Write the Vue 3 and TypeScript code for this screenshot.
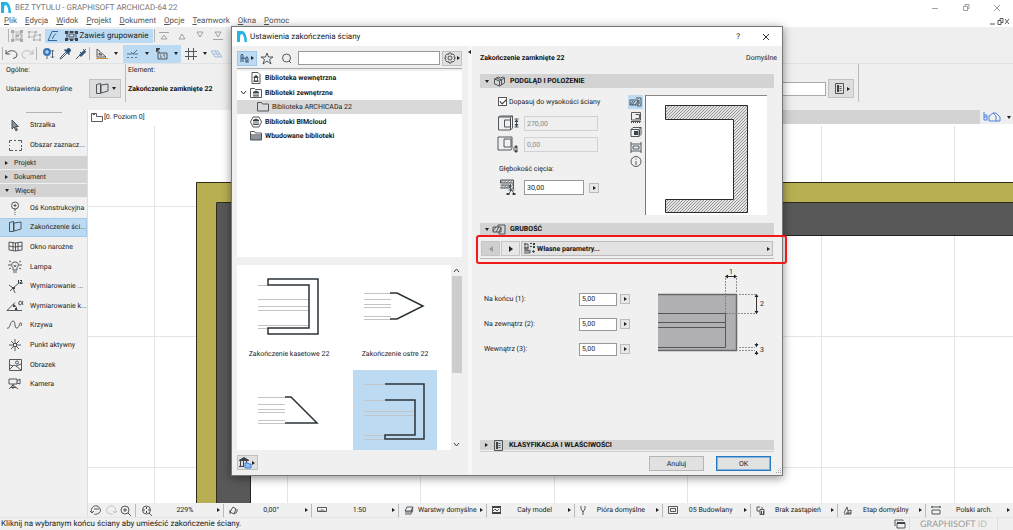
<script setup lang="ts">
import { h, ref } from 'vue'

interface Glyph { w: number; h: number; d?: string; f?: string; c?: string; fc?: string }

const glyphs: Record<string, Glyph> = {
  logo: { w: 10, h: 11, f: 'M0 11V0h5c3 0 5 5 5 11H7.500C7.500 6 6 3 4.500 3S3 7 3 11z', fc: '#25b4e0' },
  group: { w: 13, h: 12, d: 'M2 2h8v8H2zM5 4h6v5H5z', f: 'M0 0h3v3H0zM9 0h3v3H9zM0 9h3v3H0zM9 9h3v3H9zM5 5h3v2H5z', c: '#aaa', fc: '#aaa' },
  ungroup: { w: 13, h: 12, d: 'M1 2h6v5H1zM6 5h6v5H6z', f: 'M0 1h2v2H0zM7 1h2v2H7zM0 6h2v2H0zM5 9h2v2H5zM11 4h2v2h-2zM11 9h2v2h-2z', c: '#b2b2b2', fc: '#b2b2b2' },
  shape: { w: 12, h: 12, d: 'M11 1.500H5L3.500 5L1 10.500h9M9 3.500L6.500 6l-1 3', c: '#1f5a92' },
  suspend: { w: 13, h: 12, d: 'M2 2h9v7H2zM4 4h5v3H4z', f: 'M0 1h3v3H0zM5 1h3v2H5zM10 1h3v3h-3zM0 8h3v3H0zM5 9h3v2H5zM10 8h3v3h-3z' },
  topmost: { w: 10, h: 9, d: 'M0 1.500h10M5 4L8 8H2z', c: '#999' },
  up: { w: 10, h: 9, d: 'M5 3L8 8H2z', c: '#999' },
  down: { w: 10, h: 9, d: 'M5 6L2 1h6z', c: '#999' },
  bottommost: { w: 10, h: 9, d: 'M0 8.500h10M5 6L2 1h6z', c: '#999' },
  undo: { w: 13, h: 10, d: 'M1 1v4h4M1 5C4 0 12 1 12 6q0 3-4 3.500' },
  redo: { w: 13, h: 10, d: 'M12 1v4H8M12 5C9 0 1 1 1 6q0 3 4 3.500', c: '#b5b5b5' },
  find: { w: 12, h: 12, d: 'M9.500 2v8M8 3.500L9.500 2 11 3.500M8 8.500L9.500 10 11 8.500M4 8v3', f: 'M4 0a4 4 0 1 1 0 8a4 4 0 0 1 0-8M3.500 2v1.500H2v1h1.500V6h1V4.500H6v-1H4.500V2z', fc: '#3977bd', c: '#44586e' },
  dropper: { w: 12, h: 12, d: 'M7 4L2 9l-1 2 2-1 5-5', f: 'M7 2l2-2q3 0 3 3l-2 2 1 1-1 1-5-5 1-1z', fc: '#294e78', c: '#334d67' },
  syringe: { w: 12, h: 12, d: 'M1 11l4-4M5 4l3 3M8 1l3 3M9 3l2-2', f: 'M4 7l5-5 2 2-5 5z', fc: '#315c81' },
  triangle: { w: 13, h: 12, d: 'M2 1v8h9zM4 5v2h3z', f: 'M1 10h12v1H1z', fc: '#cb8a45' },
  guide: { w: 13, h: 12, d: 'M1 6h5M11 2L7 6 5 4M7 6h5M1 9.500h2M5 9.500h2M9 9.500h2', c: '#35698f' },
  coord: { w: 12, h: 12, d: 'M2 5h9v6H2zM4 7h1M7 7h2M4 9h2M8 9h1M1 1v3h3', f: 'M0 0h4v1L2 3 0 4z' },
  grid: { w: 12, h: 12, d: 'M3.500 0v12M8.500 0v12M0 3.500h12M0 8.500h12' },
  plane: { w: 13, h: 10, d: 'M1 2h7l4 6H5zM3 5h7M5 2l4 6', c: '#94b5df' },
  wallEnd: { w: 13, h: 12, d: 'M.5 1.500l4-1v10h-4zM5 2l7-1v7l-7 2z' },
  arrow: { w: 10, h: 12, d: 'M2 1v9l2-2 2 4 1.500-1-2-3.500h3z', f: 'M2 1v9l2-2 2 4 1.500-1-2-3.500h3z', fc: '#8b929a' },
  marquee: { w: 13, h: 11, d: 'M.5 3V.5H3M5 .5h2M9 .5h3.500V3M12.500 5v2M12.500 8v2.500H10M8 10.500H6M4 10.500H.5V8M.5 6V5' },
  axis: { w: 12, h: 14, d: 'M6 1a3.500 3.500 0 1 1 0 7a3.500 3.500 0 0 1 0-7M6 3v3M4.500 4.500h3M6 8v2M6 11v1M6 13v1' },
  window: { w: 15, h: 11, d: 'M1 1l6 1 7-1v8l-7 1-6-1zM5 1.500v8M7.500 2v8M10 1.500v8M1 5l6 1 7-1' },
  lamp: { w: 14, h: 13, d: 'M7 2a3 3 0 0 1 2 5.500V10H5V7.500A3 3 0 0 1 7 2M5 12h4M6 5l1 2 1-2M1 1l2 1M0 5h3M1 9l2-1M13 1l-2 1M14 5h-3M13 9l-2-1' },
  dimension: { w: 15, h: 13, d: 'M1 5l4 3 6-5h4M5 8l2 5M2 11l3-3', f: 'M4 7h3v2H4zM10 0h1v3h-1zM12 0h2v1h-2zM13 1h1v1h-1v1h1v1h-2V2h1z' },
  angle: { w: 18, h: 12, d: 'M1 10.500h15M1 10.500l8-8M7 4q4 2 4 6M17 1q-1 4-3 4t-1-3q2-3 4 3', f: 'M7 5h2v2H7zM9 8h2v2H9z' },
  curve: { w: 16, h: 10, d: 'M0 8C3 10 3 1 6 1s1 8 4 7 2-6 4-5q1 1 0 3' },
  hotspot: { w: 12, h: 12, d: 'M6 0v4M6 8v4M0 6h4M8 6h4M2 2l3 3M7 7l3 3M10 2L7 5M5 7l-3 3M4.500 4.500h3v3h-3z' },
  image: { w: 13, h: 12, d: 'M.5.5h12v11H.5zM1 10l4-4 2 1 5 4M1 6l3 1M7 7l5-2M8 2a1.500 1.500 0 1 1 0 3a1.500 1.500 0 0 1 0-3' },
  camera: { w: 14, h: 12, d: 'M1 1h8v5H1zM9 3l3-2v5L9 5M5 6v5M5 7l-4 4M5 7l5 4M2 9.500h6' },
  folderTab: { w: 12, h: 9, d: 'M.5 8.500v-8h5v3h6v5zM2 .5v1h2' },
  home3d: { w: 18, h: 10, d: 'M1 0v8h3V3H1M1 5h3M6 9V4l4-3 3 3v5zM10 1h3l4 4v4h-4', c: '#3978dd' },
  chair: { w: 10, h: 11, d: 'M1 9V2q1-2 2 0v4M1 5h3l2 1v4M3 6v3M6 6V4q2-1 2 2v4M6 8h2', c: '#274a67' },
  star: { w: 12, h: 11, d: 'M6 0l1.500 4H12L8.500 6.500 10 11 6 8l-4 3 1.500-4.500L0 4h4.500z' },
  search: { w: 11, h: 11, d: 'M5.500 1a4 4 0 1 1 0 8a4 4 0 0 1 0-8M8 8l2 2' },
  gear: { w: 12, h: 12, d: 'M5 1h2l.5 1.500L9 2l1.500 1.500-.5 1.500L11.500 6l-1.500 1 .5 1.500L9 10l-1.500-.5L7 11H5l-.5-1.500L3 10 1.500 8.500 2 7 .5 6 2 5l-.5-1.500L3 2l1.500.5zM6 4a2 2 0 1 1 0 4a2 2 0 0 1 0-4' },
  libDoc: { w: 9, h: 12, d: 'M.5.5h6l2 2v9h-8zM2 9.500h5M3 6v3M6 6v3', f: 'M2 5l2.500-2L7 5v1H2zM2 8.500h5v1H2z' },
  libFolder: { w: 12, h: 10, d: 'M.5.5h4l1 1h6v8H.5zM3 8h6M4 5v3M6 5v3M8 5v3', f: 'M3 4l3-1.500L9 4v1H3z' },
  folder: { w: 12, h: 10, d: 'M.5.5h4l1 1.500h6v7H.5z' },
  cloud: { w: 12, h: 12, d: 'M3 1h6l2.500 5L9 11H3L.5 6zM3 8.500h6M4 5v3M6 5v3M8 5v3', f: 'M3 4l3-1.500L9 4v1H3z' },
  folderFull: { w: 12, h: 10, d: 'M.5.5h4l1 1.500h6v7H.5z', f: 'M.5 3h11v6H.5z', fc: '#8d9398' },
  model: { w: 12, h: 11, d: 'M1 3l4-2 2 1 3-1 1 1v5l-5 3-5-2zM1 3l5 2 5-3M6 5v5M3 2l5 2v5' },
  height: { w: 21, h: 17, d: 'M1 2l2-1h12v12l-2 2H1zM1 2h12v13M13 2l2-1M7 5h6v7H7zM17 4h4M17 12h4M19 5v7', f: 'M19 4l2 3h-4zM19 12l-2-3h4z' },
  offset: { w: 22, h: 17, d: 'M1 1h14v11l-1 2H1zM7 3h7v8H7zM16 12h5M16 14h5M19 9v3M19 14v3', f: 'M19 12l-2-2h4zM19 14l-2 2h4z' },
  cut: { w: 15, h: 17, d: 'M0 4l3-3M3 4l3-3M6 4l3-3M9 4l3-3M0 9l3-3M3 9l3-3M6 9l3-3M0 1h13v3H0zM0 6h9v3H0M10 5v7M13 4v6M10 8l3-3M10 11l3-3M8 11h6M11 11l-3 4M11 11l3 4', f: 'M6 14h3v2H6zM12 14h3v2h-3z' },
  view2d: { w: 12, h: 10, d: 'M0 8l3-4M2 8l3-4M5 8l3-4M0 3h8v5H0zM6 1h5v8H7M9 3v4' },
  elevation: { w: 12, h: 11, d: 'M1.500 8V.5h9V8zM5.500 2.500h4v4h-4M1 9.500h10', f: 'M1 10h1v1H1zM3 10h1v1H3zM5 10h1v1H5zM7 10h1v1H7zM9 10h1v1H9z' },
  view3d: { w: 12, h: 11, d: 'M1 2.500l2-2h8v7l-2 2H1zM1 2.500h8v7M9 2.500l2-2', f: 'M4 4h4v4H4zM9 3h1v5H9z' },
  photo: { w: 12, h: 11, d: 'M1 0v11M11 0v11M1 2h10M1 9h10M3 4h6v3H3z' },
  info: { w: 12, h: 12, d: 'M6 .5a5 5 0 1 1 0 10a5 5 0 0 1 0-10M6 5v4', f: 'M5.500 2.500h1v1h-1z' },
  thickness: { w: 13, h: 11, d: 'M0 7l3-4M3 8l3-5M6 8l2-4M0 3h8v5H0zM5 3V1h7v9H6V8' },
  params: { w: 11, h: 11, d: 'M1 0v11M0 1h4M4 1v4H1M3 6v5M1 7h4v4M6 7v3M8 8.500h3M9.500 7v3M0 5h5', f: 'M6 0h2v1H6zM9 0h2v2H9zM6 3h2v1H6zM9 3h2v2H9z' },
  list: { w: 9, h: 11, d: 'M.5.5h8v10h-8zM4.500 3.500h2M4.500 5.500h2M4.500 7.500h2', f: 'M2 2h2v7H2z' },
  zoomBack: { w: 12, h: 11, d: 'M0 6l2 2 2-2M2 7C0 3 4 0 7 1s5 5 2 7-5 1-5 1M4 4h5' },
  zoomNext: { w: 12, h: 11, d: 'M12 6l-2 2-2-2M10 7C12 3 8 0 5 1S0 6 3 8s5 1 5 1', c: '#bbb' },
  zoomIn: { w: 11, h: 11, d: 'M5 1a4 4 0 1 1 0 8a4 4 0 0 1 0-8M3 5h4M5 3v4M8 8l3 3' },
  zoomFit: { w: 12, h: 11, d: 'M5.500 1a4 4 0 1 1 0 8a4 4 0 0 1 0-8M8 8l3 3', f: 'M5 2h1v2H5zM5 6h1v2H5zM2 4.500h2v1H2zM7 4.500h2v1H7z' },
  rotate: { w: 9, h: 9, d: 'M1 6l3-5 3 2-2 5zM8 3v3l-3 2M1 4v4' },
  scale: { w: 10, h: 6, d: 'M.5.5h9v4h-9zM3 3v1M5 2v2M7 3v1' },
  layers: { w: 10, h: 9, d: 'M3 1h6L7 5H1zM1 6h6l2-4M1 8h6l2-4' },
  struct: { w: 9, h: 8, d: 'M.5.5h8v7h-8zM1 5l2-2 2 2 2-2', f: 'M0 0h9v2H0zM0 6h9v2H0z' },
  pen: { w: 6, h: 9, d: 'M1 0v3l2 3 2-3V0M3 6v3' },
  frame: { w: 10, h: 8, d: 'M.5.5h9v7h-9zM2.500 2.500h5v3h-5z' },
  override: { w: 9, h: 9, d: 'M4 5H1V1h3M4 3.500h4v5H4zM6 1v2', f: 'M5 5h1v3H5zM7 5h1v3H7z' },
  stage: { w: 9, h: 9, d: 'M1 7l3-6 1 4 3-1v4H1M5 5v3M3 7h5' },
  dimStd: { w: 10, h: 9, d: 'M0 1h10M1 0v2M9 0v2M1 4h8v4H1z' },
  windows: { w: 12, h: 10, d: 'M1 7V1h8v1M3 4h8v5H3z', f: 'M3 3h8v2H3z' },
}

const Icon = (p: { name: string }) => {
  const g = glyphs[p.name]
  return h('svg', { width: g.w, height: g.h, viewBox: `0 0 ${g.w} ${g.h}`, 'aria-hidden': 'true', style: 'display:block;flex:none;overflow:visible' }, [
    g.f ? h('path', { d: g.f, fill: g.fc ?? '#3c4247' }) : null,
    g.d ? h('path', { d: g.d, fill: 'none', stroke: g.c ?? '#41474c', 'stroke-width': 0.9 }) : null,
  ])
}
Icon.props = ['name']

const menu = ['Plik', 'Edycja', 'Widok', 'Projekt', 'Dokument', 'Opcje', 'Teamwork', 'Okna', 'Pomoc']
const tools = [
  ['axis', 'Oś Konstrukcyjna'], ['wallEnd', 'Zakończenie ści...'], ['window', 'Okno narożne'], ['lamp', 'Lampa'],
  ['dimension', 'Wymiarowanie ...'], ['angle', 'Wymiarowanie k...'], ['curve', 'Krzywa'], ['hotspot', 'Punkt aktywny'],
  ['image', 'Obrazek'], ['camera', 'Kamera'],
]
const activeTool = ref(1)
const vGrid = [66, 199, 332, 466, 599, 733, 866]
const hGrid = [82, 212, 343]
const quick = [
  ['zoomFit', '229%'], ['rotate', '0,00°'], ['scale', '1:50'], ['layers', 'Warstwy domyślne'], ['struct', 'Cały model'],
  ['pen', 'Pióra domyślne'], ['frame', '05 Budowlany'], ['override', 'Brak zastąpień'], ['stage', 'Etap domyślny'], ['dimStd', 'Polski arch.'],
]
const tree = [
  { icon: 'libDoc', label: 'Biblioteka wewnętrzna' },
  { icon: 'libFolder', label: 'Biblioteki zewnętrzne', open: true },
  { icon: 'folder', label: 'Biblioteka ARCHICADa 22', child: true },
  { icon: 'cloud', label: 'Biblioteki BIMcloud' },
  { icon: 'folderFull', label: 'Wbudowane biblioteki' },
]
const ends = [
  { label: 'Zakończenie kasetowe 22', light: 'M11 20.500h10M11 34.500h51M11 41.500h51M11 45.500h51M11 60.500h51M11 63.500h10', dark: 'M21 14h50v55H21v-6h41V20H21z' },
  { label: 'Zakończenie ostre 22', light: 'M11 28.500h27M11 34.500h27M11 39.500h27M11 42.500h27M11 51.500h27M11 54.500h27', dark: 'M37 28h7l26 13-26 13h-7' },
  { label: '', light: 'M11 27.500h27M11 34.500h27M11 39.500h27M11 42.500h27M11 50.500h27M11 53.500h27', dark: 'M38 27h6l26 26H38' },
  { label: '', light: 'M11 14.500h21M11 30.500h21M11 41.500h51M11 45.500h51M11 65.500h21M11 69.500h21', dark: 'M32 14h39v55H32v-4h30V30H32' },
]
const activeEnd = ref(3)
const views = ['view2d', 'elevation', 'view3d', 'photo', 'info']
const activeView = ref(0)
const query = ref('')
const fit = ref(true)
const depth = ref('30,00')
const params = ref([
  { id: 'end', label: 'Na końcu (1):', value: '5,00' },
  { id: 'outer', label: 'Na zewnątrz (2):', value: '5,00' },
  { id: 'inner', label: 'Wewnątrz (3):', value: '5,00' },
])
</script>

<template>
  <div class="app">
    <header class="titlebar">
      <Icon name="logo" />
      <span>BEZ TYTUŁU - GRAPHISOFT ARCHICAD-64 22</span>
      <div class="wins">
        <button aria-label="Minimalizuj"><svg width="8" height="8"><path d="M1 4.500h6" /></svg></button>
        <button aria-label="Przywróć"><svg width="8" height="8"><path d="M1.500 2.500h4v4h-4zM3 2V.5h4v4H6" /></svg></button>
        <button aria-label="Zamknij"><svg width="8" height="8"><path d="M1 1l6 6M7 1L1 7" /></svg></button>
      </div>
    </header>
    <nav class="menubar">
      <a v-for="m in menu" :key="m" href="#"><u>{{ m[0] }}</u>{{ m.slice(1) }}</a>
      <svg class="docwins" width="20" height="7"><path d="M0 6h5M8 2.500h3v4H8zM10 2V.5h3v4h-2M15 1l4 5M19 1l-4 5" /></svg>
    </nav>

    <div class="bars">
      <div class="bar first">
        <i class="sep"></i>
        <button class="tb mid"><Icon name="group" /></button>
        <button class="tb mid"><Icon name="ungroup" /></button>
        <button class="tb on mid"><Icon name="shape" /></button>
        <button class="tb on wide"><Icon name="suspend" />Zawieś grupowanie</button>
        <i class="sep"></i>
        <button v-for="o in ['topmost', 'up', 'down', 'bottommost']" :key="o" class="tb order"><Icon :name="o" /></button>
      </div>
      <div class="bar second">
        <i class="sep"></i>
        <button class="tb mid"><Icon name="undo" /></button>
        <button class="tb mid"><Icon name="redo" /></button>
        <i class="sep gap"></i>
        <button class="tb mid"><Icon name="find" /></button>
        <button class="tb mid"><Icon name="dropper" /></button>
        <button class="tb mid"><Icon name="syringe" /></button>
        <i class="sep"></i>
        <button class="tb drop first-drop"><Icon name="triangle" /><b class="dn"></b></button>
        <button class="tb drop on"><Icon name="guide" /><b class="dn"></b></button>
        <button class="tb drop on"><Icon name="coord" /><b class="dn"></b></button>
        <button class="tb drop"><Icon name="grid" /><b class="dn"></b></button>
        <button class="tb"><Icon name="plane" /></button>
      </div>
    </div>

    <section class="infobox">
      <div class="general">
        <span>Ogólne:</span>
        <div class="defaults"><span>Ustawienia domyślne</span>
          <button class="boxbtn" aria-label="Typ zakończenia"><Icon name="wallEnd" /><b class="dn"></b></button>
        </div>
      </div>
      <div class="element"><span>Element:</span><strong>Zakończenie zamknięte 22</strong></div>
      <div class="extra">
        <input type="text" aria-label="Identyfikator" />
        <button class="boxbtn" aria-label="Właściwości"><Icon name="list" /><b class="rt"></b></button>
      </div>
    </section>

    <main class="work">
      <aside class="toolbox">
        <i class="grip"></i>
        <button class="tool"><span><Icon name="arrow" /></span>Strzałka</button>
        <button class="tool"><span><Icon name="marquee" /></span>Obszar zaznacz...</button>
        <button class="cat"><b class="rt"></b>Projekt</button>
        <button class="cat"><b class="rt"></b>Dokument</button>
        <button class="cat"><b class="dn"></b>Więcej</button>
        <div class="tools">
          <button v-for="(t, i) in tools" :key="t[0]" class="tool" :class="{ on: i === activeTool }" @click="activeTool = i">
            <span><Icon :name="t[0]" /></span>{{ t[1] }}
          </button>
        </div>
      </aside>
      <div class="stagearea">
        <div class="tabs">
          <button class="tab"><Icon name="folderTab" />[0. Poziom 0]</button>
          <button class="nav3d" aria-label="Widok 3D"><Icon name="home3d" /><b class="dn"></b></button>
        </div>
        <svg class="plan" aria-label="Rzut ściany">
          <rect v-for="x in vGrid" :key="'v' + x" :x="x" y="2" width="1" height="100%" fill="#e4e4e4" />
          <rect v-for="y in hGrid" :key="'h' + y" x="0" :y="y" width="100%" height="1" fill="#e4e4e4" />
          <rect x="108" y="58" width="20" height="100%" fill="#b8ae52" />
          <rect x="108" y="58" width="100%" height="20" fill="#b8ae52" />
          <path d="M108.500 400V58.500H2000M128.500 400V78.500H2000" fill="none" stroke="#2e2c1b" stroke-width="1" />
          <rect x="129" y="79" width="33" height="100%" fill="#585858" />
          <rect x="129" y="79" width="100%" height="32" fill="#585858" />
          <path d="M162.500 400V111.500H2000" fill="none" stroke="#222" />
        </svg>
        <div class="quick">
          <div class="nav">
            <Icon name="zoomBack" /><Icon name="zoomNext" /><Icon name="zoomIn" />
          </div>
          <button v-for="q in quick" :key="q[0]" class="opt"><Icon :name="q[0]" /><span>{{ q[1] }}</span><b class="rt"></b></button>
        </div>
      </div>
    </main>

    <footer class="status">
      <span>Kliknij na wybranym końcu ściany aby umieścić zakończenie ściany.</span>
      <div class="gid"><Icon name="windows" /><em>GRAPHISOFT <small>ID</small></em></div>
    </footer>

    <div class="dialog" role="dialog" aria-labelledby="dlg">
      <div class="dtitle">
        <Icon name="logo" /><span id="dlg">Ustawienia zakończenia ściany</span>
        <button class="help" aria-label="Pomoc">?</button>
        <button aria-label="Zamknij"><svg width="8" height="8"><path d="M1 1l6 6M7 1L1 7" /></svg></button>
      </div>
      <div class="dbody">
        <div class="browser">
          <div class="find">
            <button class="chair" aria-label="Widok folderów"><Icon name="chair" /><b class="rt"></b></button>
            <button class="plain" aria-label="Ulubione"><Icon name="star" /></button>
            <label for="q"><Icon name="search" /></label>
            <input id="q" v-model="query" type="text" />
            <button class="gear" aria-label="Opcje"><Icon name="gear" /><b class="rt"></b></button>
          </div>
          <ul class="tree">
            <li v-for="n in tree" :key="n.label" :class="{ child: n.child }">
              <i><svg v-if="n.open" width="7" height="5"><path d="M1 1l2.500 3L6 1" fill="none" stroke="#333" /></svg></i>
              <Icon :name="n.icon" />{{ n.label }}
            </li>
          </ul>
          <div class="gallery">
            <div class="cells">
              <button v-for="(e, i) in ends" :key="i" class="cell" :class="{ on: i === activeEnd }" @click="activeEnd = i">
                <svg width="84" height="80">
                  <path :d="e.light" fill="none" stroke="#c2c4c6" />
                  <path :d="e.dark" fill="none" stroke="#2b3237" stroke-width="1.500" />
                </svg>
                <span>{{ e.label }}</span>
              </button>
            </div>
            <div class="scroll">
              <svg width="7" height="11"><path d="M1 7l2.500-3L6 7" /></svg>
              <i></i>
              <svg width="7" height="11"><path d="M1 4l2.500 3L6 4" /></svg>
            </div>
          </div>
          <button class="lib" aria-label="Menedżer bibliotek">
            <svg width="14" height="12"><path d="M0 3l5-3 5 3v1H0zM1 4h1v5H1zM4 4h1v5H4zM7 4h1v3H7zM0 9h5v1H0z" fill="#3c4247" /><path d="M6 6h3l1 1h2v4H6z" fill="#8dbef7" stroke="#3d7bd0" /></svg>
            <b class="rt"></b>
          </button>
        </div>
        <div class="split"><b class="lt"></b></div>
        <div class="settings">
          <div class="head"><strong>Zakończenie zamknięte 22</strong><span>Domyślne</span></div>
          <h3><b class="dn"></b><Icon name="model" />PODGLĄD I POŁOŻENIE</h3>
          <div class="position">
            <div class="form">
              <label class="fit"><input v-model="fit" type="checkbox" />Dopasuj do wysokości ściany</label>
              <div class="line"><Icon name="height" /><input type="text" value="270,00" aria-label="Wysokość" disabled /></div>
              <div class="line"><Icon name="offset" /><input type="text" value="0,00" aria-label="Przesunięcie" disabled /></div>
              <label class="depthlabel" for="depth">Głębokość cięcia:</label>
              <div class="line"><Icon name="cut" /><input id="depth" v-model="depth" type="text" /><button class="sq" aria-label="Opcje głębokości"><b class="rt"></b></button></div>
            </div>
            <div class="views">
              <button v-for="(v, i) in views" :key="v" :class="{ on: i === activeView }" :aria-label="v" @click="activeView = i"><Icon :name="v" /></button>
            </div>
            <svg class="preview" width="122" height="120">
              <defs><pattern id="hatch" width="3" height="3" patternUnits="userSpaceOnUse"><rect width="3" height="3" fill="#e4e4e4" /><path d="M-1 1l2-2M0 3l3-3M2 4l2-2" stroke="#808080" stroke-width="0.8" /></pattern></defs>
              <path d="M19.500 9.500h82v107h-82v-13h68v-80h-68z" fill="url(#hatch)" stroke="#2a2a2a" />
            </svg>
          </div>
          <h3><b class="dn"></b><Icon name="thickness" />GRUBOŚĆ</h3>
          <div class="paging">
            <button class="pg" aria-label="Poprzednia" disabled><b class="lt big"></b></button>
            <button class="pg" aria-label="Następna"><b class="rt big"></b></button>
            <button class="own"><Icon name="params" /><strong>Własne parametry...</strong><b class="rt"></b></button>
          </div>
          <div class="thick">
            <div class="fields">
              <div v-for="p in params" :key="p.id" class="field">
                <label :for="p.id">{{ p.label }}</label>
                <input :id="p.id" v-model="p.value" type="text" />
                <button class="sq" :aria-label="'Opcje: ' + p.label"><b class="rt"></b></button>
              </div>
            </div>
            <svg class="diagram" width="112" height="88">
              <rect x="0" y="26" width="79" height="57" fill="#b0b0b4" />
              <path d="M0 26.500h78.500v56H0" fill="none" stroke="#66676b" stroke-width="1.500" />
              <path d="M0 45.500h67.500v34H0M0 54.500h67M0 59.500h67" fill="none" stroke="#55565a" />
              <path d="M67.500 45V8M78.500 24V8M81 26.500h18M68 45.500h31M81 79.500h16M81 82.500h16" fill="none" stroke="#777" stroke-dasharray="2 1" stroke-width="0.8" />
              <path d="M69 8.500h9M98.500 28v16M98.500 75v4M98.500 83v4" stroke="#333" />
              <path d="M67 8.500l3-2v4zM79 8.500l-3-2v4zM98.500 26l-2 3h4zM98.500 46l-2-3h4zM98.500 79l-2-3h4zM98.500 83l-2 3h4z" fill="#222" />
              <text x="71" y="6">1</text><text x="102" y="38">2</text><text x="102" y="84">3</text>
            </svg>
          </div>
          <h3 class="last"><b class="rt"></b><Icon name="list" />KLASYFIKACJA I WŁAŚCIWOŚCI</h3>
          <div class="actions"><button>Anuluj</button><button class="ok">OK</button></div>
        </div>
      </div>
      <svg class="resize" width="7" height="7"><path d="M5 0h1v1H5zM3 2h1v1H3zM5 2h1v1H5zM1 4h1v1H1zM3 4h1v1H3zM5 4h1v1H5z" fill="#aaa" /></svg>
      <div class="mark"></div>
    </div>
  </div>
</template>

<style>
html, body { margin: 0; height: 100%; overflow: hidden; }
</style>

<style scoped>
* { box-sizing: border-box; }
.app { position: relative; height: 100vh; display: flex; flex-direction: column; background: #fff; color: #222; font: 7px/10px Roboto, "Open Sans", sans-serif; text-rendering: geometricPrecision; }
button, input { font: inherit; color: inherit; text-rendering: inherit; margin: 0; padding: 0; border: 0; background: none; border-radius: 0; min-width: 0; }
button { display: flex; align-items: center; white-space: nowrap; }
.dn, .rt, .lt { display: block; flex: none; width: 0; height: 0; border: 2px solid transparent; }
.dn { border-top: 3px solid #222; border-bottom: 0; }
.rt { border-left: 3px solid #222; border-right: 0; }
.lt { border-right: 3px solid #222; border-left: 0; }
.rt.big { border-width: 3px 0 3px 4px; }
.lt.big { border-width: 3px 4px 3px 0; }
.titlebar { flex: none; height: 15px; display: flex; align-items: center; gap: 4px; padding: 0 12px 0 1px; font-size: 8px; color: #777; }
.wins { margin-left: auto; display: flex; gap: 23px; }
.wins path, .docwins path { fill: none; stroke: #888; stroke-width: 0.8; }
.menubar { flex: none; height: 12px; display: flex; align-items: center; gap: 8px; padding: 0 3px 0 4px; font-size: 8px; color: #555; }
.menubar a { color: inherit; text-decoration: none; }
.docwins { margin-left: auto; }
.docwins path { stroke: #333; }
.bars { flex: none; background: #efefef; height: 37px; border-bottom: 1px solid #e2e2e2; }
.bar { display: flex; align-items: center; }
.first { height: 17px; padding-left: 8px; }
.second { height: 19px; padding-left: 2px; }
.sep { flex: none; width: 1px; height: 13px; background: #b5b5b5; }
.on { background: #bcdaf2; }
.first .tb { height: 14px; justify-content: center; }
.first .mid { width: 17px; }
.first .mid.on { margin-left: 2px; width: 16px; }
.first .wide { font-size: 8px; gap: 1px; width: 92px; }
.first .wide + .sep { margin-left: 1px; }
.first .order { width: 18px; }
.second .tb { height: 18px; justify-content: center; }
.second .mid { width: 16px; }
.second .gap { margin: 0 4px 0 1px; }
.second .drop { width: 29px; gap: 6px; }
.second .first-drop { width: 33px; }
.infobox { flex: none; height: 46px; background: #efefef; display: flex; }
.general { width: 126px; border-right: 1px solid #bbb; padding: 1px 4px 0 6px; height: 38px; }
.defaults { display: flex; align-items: center; justify-content: space-between; margin-top: 4px; height: 19px; }
.boxbtn { width: 32px; height: 19px; justify-content: space-around; padding: 0 2px 0 4px; background: #dedede; border: 1px solid #c2c2c2; }
.element { display: flex; flex-direction: column; padding: 1px 0 0 2px; gap: 9px; }
.element strong { color: #111; }
.extra { margin-left: auto; width: 210px; height: 38px; margin-right: 154px; border-right: 1px solid #bbb; display: flex; align-items: center; gap: 2px; padding: 11px 4px 0 0; }
.extra input { flex: 1; height: 14px; border: 1px solid #aaa; background: #fff; }
.extra .boxbtn { width: 26px; }
.work { flex: 1; min-height: 0; display: flex; }
.toolbox { flex: none; width: 88px; background: #f0f0f0; border-right: 1px solid #ddd; padding-top: 2px; }
.grip { display: block; width: 36px; height: 1px; background: #b5b5b5; margin: 0 0 2px 26px; }
.tool { width: 100%; height: 20px; }
.tool span { width: 30px; display: flex; justify-content: center; flex: none; }
.tools { display: grid; grid-auto-rows: 1fr; height: 196px; margin-top: 1px; }
.tools .tool { height: auto; }
.tool.on { background: #bcdaf2; border: 1px solid #a3cbec; border-left: 0; }
.cat { width: 100%; height: 13px; background: #d3d3d3; margin-top: 1px; padding-left: 5px; gap: 6px; }
.stagearea { flex: 1; min-width: 0; display: flex; flex-direction: column; }
.tabs { flex: none; height: 14px; display: flex; background: #d3d3d3; justify-content: space-between; }
.tab { width: 160px; background: #fff; padding-left: 3px; gap: 1px; }
.nav3d { width: 33px; background: #efefef; gap: 6px; justify-content: center; }
.plan { flex: 1; width: 100%; min-height: 0; display: block; }
.quick { flex: none; height: 14px; background: #f0f0f0; display: grid; grid-template-columns: 47px repeat(10, 1fr); align-items: center; }
.nav { display: flex; justify-content: space-between; padding: 0 4px 0 2px; }
.opt { border-left: 1px solid #bbb; height: 13px; padding: 0 3px 0 5px; }
.opt span { flex: 1; text-align: center; }
.status { flex: none; height: 13px; background: #f0f0f0; display: flex; align-items: center; justify-content: space-between; border-top: 1px solid #e6e6e6; padding: 0 15px 0 1px; font-size: 8px; }
.gid { display: flex; align-items: center; gap: 3px; border-right: 1px solid #ddd; padding-right: 10px; }
.gid em { font: 9px/12px Lato, sans-serif; color: #999; border-left: 1px solid #ddd; padding-left: 10px; }
.gid small { font-size: 9px; color: #bbb; }
.dialog { position: absolute; left: 231px; top: 26px; width: 552px; height: 450px; display: flex; flex-direction: column; background: #f0f0f0; border: 1px solid #777; box-shadow: 0 2px 9px rgba(0, 0, 0, 0.45); }
.dtitle { flex: none; height: 19px; background: #fff; display: flex; align-items: center; padding: 0 12px 0 5px; gap: 3px; font-size: 8px; }
.dtitle span { flex: 1; }
.dtitle .help { margin-right: 19px; }
.dtitle path { fill: none; stroke: #333; }
.dbody { flex: 1; min-height: 0; display: flex; }
.browser { width: 230px; padding: 4px 0 0 5px; display: flex; flex-direction: column; }
.find { display: flex; align-items: center; height: 19px; padding-bottom: 2px; border-bottom: 1px solid #aaa; }
.find input { flex: 1; height: 14px; border: 1px solid #999; background: #fff; }
.chair { width: 20px; height: 15px; background: #bcdaf2; border: 1px solid #9dc6e8; justify-content: space-evenly; }
.plain { padding: 0 4px; }
.find label { padding: 0 6px 0 4px; }
.gear { width: 20px; height: 15px; margin-left: 2px; background: #e0e0e0; border: 1px solid #c0c0c0; justify-content: space-between; padding: 0 1px; }
.tree { flex: none; height: 186px; margin: 2px 0 0; padding: 0; background: #fff; list-style: none; font-weight: 700; display: grid; align-content: start; grid-template-rows: 14px 15px 14px 15px 14px; }
.tree li { display: flex; align-items: center; gap: 3px; }
.tree li i { width: 10px; display: flex; justify-content: flex-end; }
.tree li > svg { min-width: 12px; }
.tree .child { font-weight: 400; background: #d9d9d9; padding-left: 7px; }
.gallery { flex: none; height: 185px; margin-top: 8px; display: flex; }
.cells { flex: 1; overflow: hidden; background: #fff; display: grid; grid-template-columns: 84px 84px; grid-auto-rows: 105px; gap: 0 22px; padding-left: 10px; }
.cell { flex-direction: column; gap: 4px; }
.cell svg { flex: none; }
.scroll { width: 11px; display: flex; flex-direction: column; align-items: center; }
.scroll path { fill: none; stroke: #444; }
.scroll i { width: 10px; height: 97px; background: #cdcdcd; margin-bottom: auto; }
.lib { width: 21px; height: 15px; margin-top: 5px; background: #e0e0e0; border: 1px solid #c0c0c0; justify-content: space-between; padding: 0 2px 0 1px; }
.split { width: 10px; padding: 4px 0 0 6px; border-right: 4px solid #f7f7f7; }
.settings { flex: 1; min-width: 0; padding: 6px 8px 0; display: flex; flex-direction: column; }
.head { display: flex; justify-content: space-between; height: 22px; margin-right: -3px; line-height: 13px; }
.head strong, h3, .own strong { color: #111; }
h3 { flex: none; margin: 0; height: 14px; background: #d3d3d3; display: flex; align-items: center; gap: 4px; padding-left: 5px; font-size: 7px; font-weight: 700; }
h3 svg { min-width: 13px; }
.position { height: 135px; display: flex; padding: 7px 0 0 17px; }
.form { width: 131px; }
.form input[type='text'] { height: 15px; padding-left: 2px; border: 1px solid #999; background: #fff; width: 60px; }
.form input:disabled { width: 74px; border-color: #d2d2d2; background: #efefef; color: #888; }
.fit { display: flex; align-items: center; gap: 2px; height: 13px; padding-left: 1px; }
.fit input { appearance: none; width: 9px; height: 9px; border: 1px solid #555; background: #fff; }
.fit input:checked::after { content: ""; display: block; width: 5px; height: 3px; margin: 1px; border: solid #333; border-width: 0 0 1px 1px; transform: rotate(-45deg); }
.line { display: flex; align-items: center; height: 21px; gap: 5px; }
.line > svg { min-width: 22px; }
.fit + .line { margin-top: 5px; }
.depthlabel { display: block; padding: 9px 0 3px 2px; }
.sq { width: 10px; height: 10px; border: 1px solid #bbb; background: #e8e8e8; justify-content: center; }
.views button { width: 15px; height: 14px; margin-bottom: 1px; justify-content: center; }
.preview { margin-left: 2px; background: #fff; border-left: 1px solid #777; border-top: 1px solid #888; flex: none; }
.position + h3 { height: 12px; }
.paging { display: flex; height: 24px; padding: 6px 1px 2px; border-bottom: 1px solid #bbb; gap: 1px; }
.pg { width: 19px; border: 1px solid #c5c5c5; background: #e6e6e6; justify-content: center; }
.pg:disabled { background: #d0d0d0; }
.pg:disabled .lt { border-right-color: #999; }
.own { flex: 1; border: 1px solid #bbb; background: #e2e2e2; padding: 0 2px; gap: 2px; }
.own strong { flex: 1; text-align: left; }
.thick { flex: 1; display: flex; padding: 9px 0 0 4px; }
.fields { width: 174px; padding-top: 19px; }
.field { display: grid; grid-template-columns: 92px 38px 10px; column-gap: 3px; align-items: center; height: 24px; }
.field + .field { margin-top: 1px; }
.field label { white-space: nowrap; }
.field input { height: 13px; border: 1px solid #999; background: #fff; padding-left: 2px; }
.diagram { overflow: visible; }
.diagram text { font: 7px Roboto, sans-serif; fill: #222; }
.last { height: 10px; }
.actions { display: flex; justify-content: flex-end; gap: 12px; border-top: 1px solid #ccc; margin-top: 1px; padding: 4px 3px 4px 0; }
.actions button { width: 55px; height: 15px; border: 1px solid #b5b5b5; background: #e1e1e1; justify-content: center; }
.actions .ok { border: 1px solid #2678c0; outline: 1px solid #84b4de; outline-offset: -2px; }
.resize { position: absolute; right: 0; bottom: 0; }
.mark { position: absolute; left: 244px; top: 208px; width: 311px; height: 29px; border: 2px solid #f01818; border-radius: 3px; pointer-events: none; }
</style>
